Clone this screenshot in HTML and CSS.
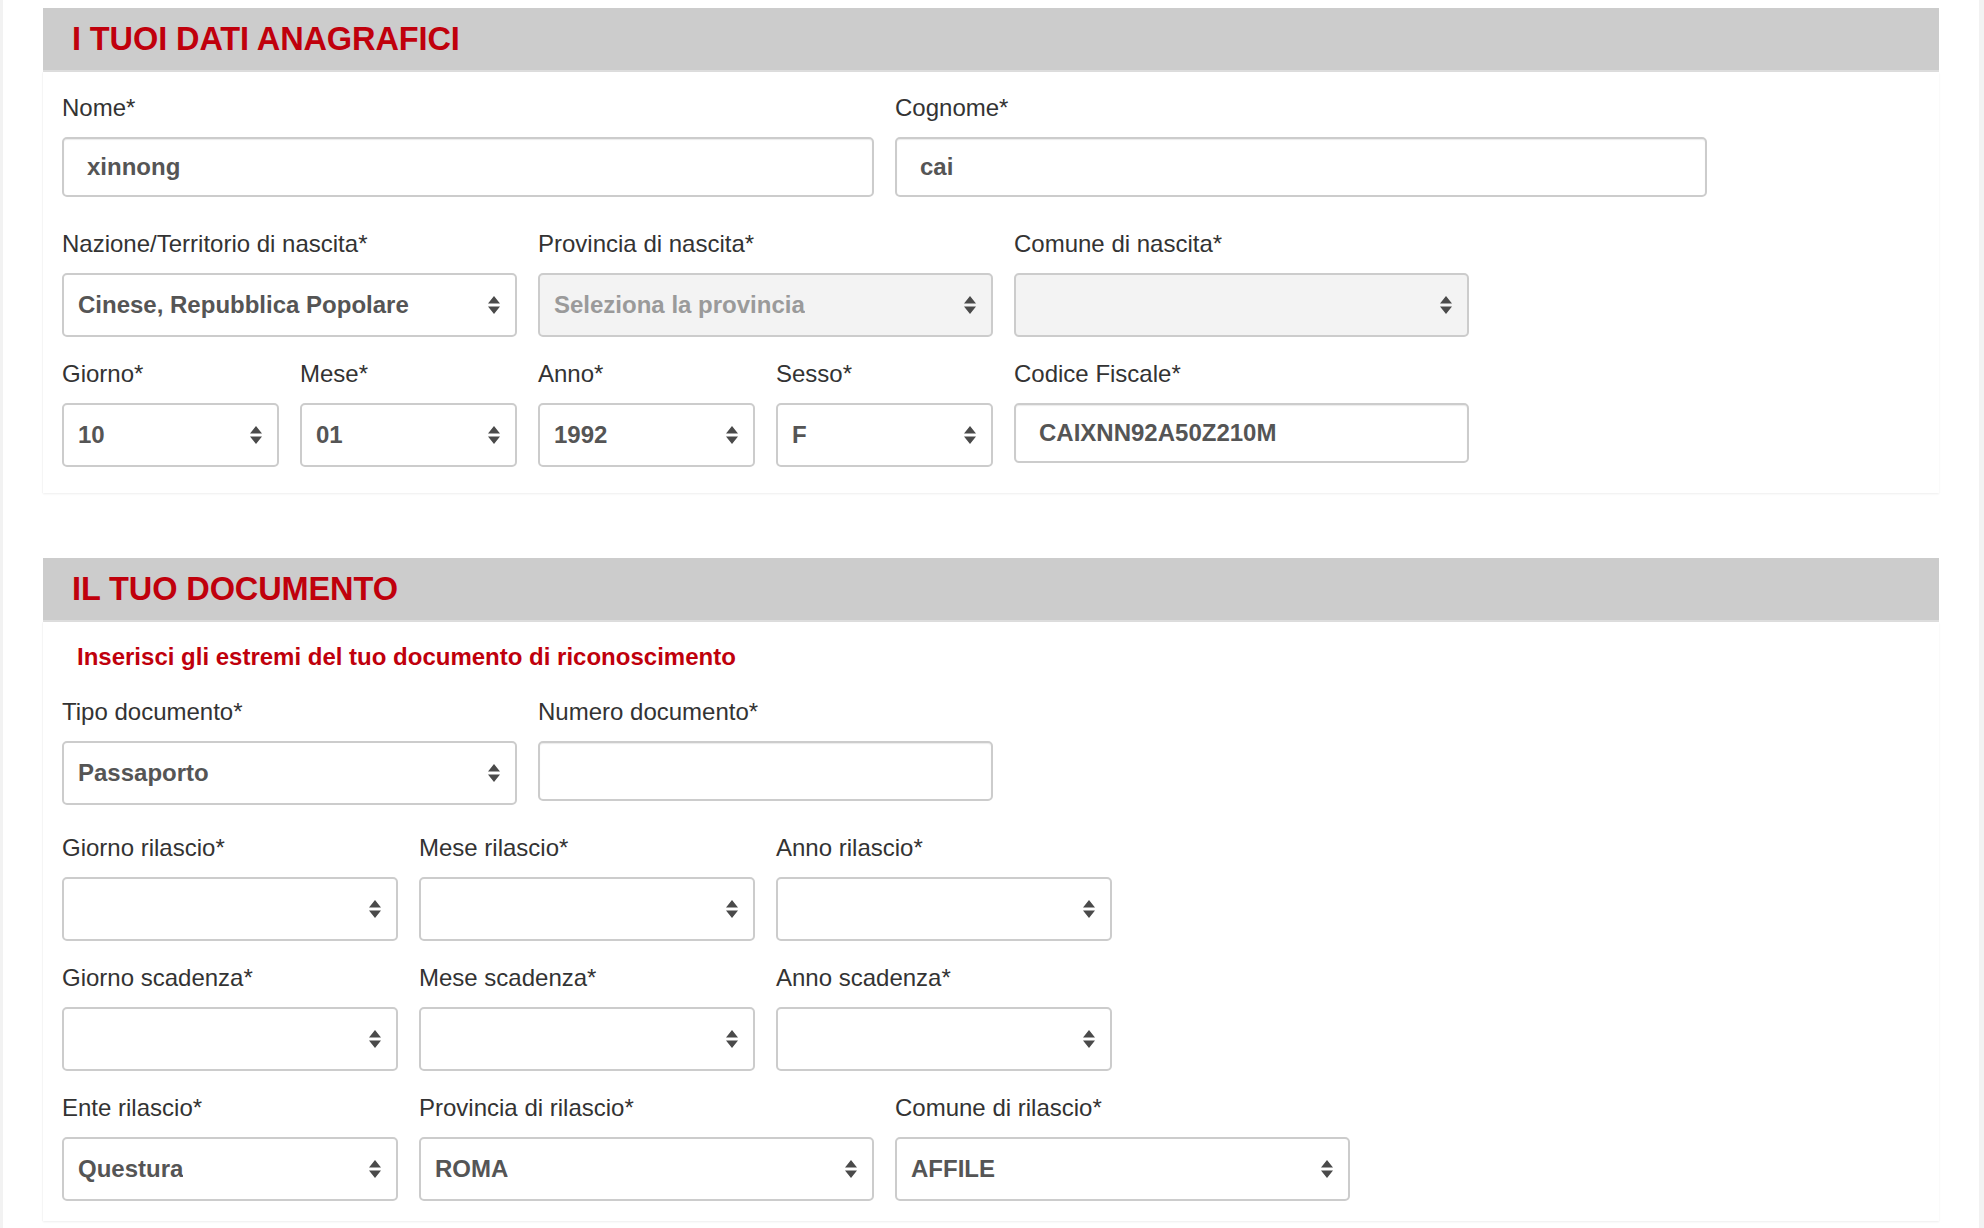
FILE: index.html
```html
<!DOCTYPE html>
<html lang="it">
<head>
<meta charset="utf-8">
<title>Dati anagrafici</title>
<link rel="stylesheet" href="styles.css">
</head>
<body>
<div class="page">

  <section class="section">
    <h2 class="section-title">I TUOI DATI ANAGRAFICI</h2>
    <div class="panel panel-first">
      <div class="row">
        <div class="field text span-7">
          <label class="label">Nome*</label>
          <input class="input" type="text" value="xinnong">
        </div>
        <div class="field text span-7">
          <label class="label">Cognome*</label>
          <input class="input" type="text" value="cai">
        </div>
      </div>
      <div class="row">
        <div class="field span-4">
          <label class="label">Nazione/Territorio di nascita*</label>
          <div class="select"><span class="select-value">Cinese, Repubblica Popolare</span><svg class="arrows" width="12" height="18" viewBox="0 0 12 18"><path d="M0 7.5L6 0L12 7.5Z M0 10.5L12 10.5L6 18Z"/></svg></div>
        </div>
        <div class="field span-4">
          <label class="label">Provincia di nascita*</label>
          <div class="select disabled"><span class="select-value">Seleziona la provincia</span><svg class="arrows" width="12" height="18" viewBox="0 0 12 18"><path d="M0 7.5L6 0L12 7.5Z M0 10.5L12 10.5L6 18Z"/></svg></div>
        </div>
        <div class="field span-4">
          <label class="label">Comune di nascita*</label>
          <div class="select disabled"><span class="select-value"></span><svg class="arrows" width="12" height="18" viewBox="0 0 12 18"><path d="M0 7.5L6 0L12 7.5Z M0 10.5L12 10.5L6 18Z"/></svg></div>
        </div>
      </div>
      <div class="row last">
        <div class="field span-2">
          <label class="label">Giorno*</label>
          <div class="select"><span class="select-value">10</span><svg class="arrows" width="12" height="18" viewBox="0 0 12 18"><path d="M0 7.5L6 0L12 7.5Z M0 10.5L12 10.5L6 18Z"/></svg></div>
        </div>
        <div class="field span-2">
          <label class="label">Mese*</label>
          <div class="select"><span class="select-value">01</span><svg class="arrows" width="12" height="18" viewBox="0 0 12 18"><path d="M0 7.5L6 0L12 7.5Z M0 10.5L12 10.5L6 18Z"/></svg></div>
        </div>
        <div class="field span-2">
          <label class="label">Anno*</label>
          <div class="select"><span class="select-value">1992</span><svg class="arrows" width="12" height="18" viewBox="0 0 12 18"><path d="M0 7.5L6 0L12 7.5Z M0 10.5L12 10.5L6 18Z"/></svg></div>
        </div>
        <div class="field span-2">
          <label class="label">Sesso*</label>
          <div class="select"><span class="select-value">F</span><svg class="arrows" width="12" height="18" viewBox="0 0 12 18"><path d="M0 7.5L6 0L12 7.5Z M0 10.5L12 10.5L6 18Z"/></svg></div>
        </div>
        <div class="field text span-4">
          <label class="label">Codice Fiscale*</label>
          <input class="input" type="text" value="CAIXNN92A50Z210M">
        </div>
      </div>
    </div>
  </section>

  <section class="section section-doc">
    <h2 class="section-title">IL TUO DOCUMENTO</h2>
    <div class="panel panel-last">
      <p class="subtitle">Inserisci gli estremi del tuo documento di riconoscimento</p>
      <div class="row">
        <div class="field span-4">
          <label class="label">Tipo documento*</label>
          <div class="select"><span class="select-value">Passaporto</span><svg class="arrows" width="12" height="18" viewBox="0 0 12 18"><path d="M0 7.5L6 0L12 7.5Z M0 10.5L12 10.5L6 18Z"/></svg></div>
        </div>
        <div class="field text span-4">
          <label class="label">Numero documento*</label>
          <input class="input" type="text" value="">
        </div>
      </div>
      <div class="row">
        <div class="field span-3">
          <label class="label">Giorno rilascio*</label>
          <div class="select"><span class="select-value"></span><svg class="arrows" width="12" height="18" viewBox="0 0 12 18"><path d="M0 7.5L6 0L12 7.5Z M0 10.5L12 10.5L6 18Z"/></svg></div>
        </div>
        <div class="field span-3">
          <label class="label">Mese rilascio*</label>
          <div class="select"><span class="select-value"></span><svg class="arrows" width="12" height="18" viewBox="0 0 12 18"><path d="M0 7.5L6 0L12 7.5Z M0 10.5L12 10.5L6 18Z"/></svg></div>
        </div>
        <div class="field span-3">
          <label class="label">Anno rilascio*</label>
          <div class="select"><span class="select-value"></span><svg class="arrows" width="12" height="18" viewBox="0 0 12 18"><path d="M0 7.5L6 0L12 7.5Z M0 10.5L12 10.5L6 18Z"/></svg></div>
        </div>
      </div>
      <div class="row">
        <div class="field span-3">
          <label class="label">Giorno scadenza*</label>
          <div class="select"><span class="select-value"></span><svg class="arrows" width="12" height="18" viewBox="0 0 12 18"><path d="M0 7.5L6 0L12 7.5Z M0 10.5L12 10.5L6 18Z"/></svg></div>
        </div>
        <div class="field span-3">
          <label class="label">Mese scadenza*</label>
          <div class="select"><span class="select-value"></span><svg class="arrows" width="12" height="18" viewBox="0 0 12 18"><path d="M0 7.5L6 0L12 7.5Z M0 10.5L12 10.5L6 18Z"/></svg></div>
        </div>
        <div class="field span-3">
          <label class="label">Anno scadenza*</label>
          <div class="select"><span class="select-value"></span><svg class="arrows" width="12" height="18" viewBox="0 0 12 18"><path d="M0 7.5L6 0L12 7.5Z M0 10.5L12 10.5L6 18Z"/></svg></div>
        </div>
      </div>
      <div class="row last">
        <div class="field span-3">
          <label class="label">Ente rilascio*</label>
          <div class="select"><span class="select-value">Questura</span><svg class="arrows" width="12" height="18" viewBox="0 0 12 18"><path d="M0 7.5L6 0L12 7.5Z M0 10.5L12 10.5L6 18Z"/></svg></div>
        </div>
        <div class="field span-4">
          <label class="label">Provincia di rilascio*</label>
          <div class="select"><span class="select-value">ROMA</span><svg class="arrows" width="12" height="18" viewBox="0 0 12 18"><path d="M0 7.5L6 0L12 7.5Z M0 10.5L12 10.5L6 18Z"/></svg></div>
        </div>
        <div class="field span-4">
          <label class="label">Comune di rilascio*</label>
          <div class="select"><span class="select-value">AFFILE</span><svg class="arrows" width="12" height="18" viewBox="0 0 12 18"><path d="M0 7.5L6 0L12 7.5Z M0 10.5L12 10.5L6 18Z"/></svg></div>
        </div>
      </div>
    </div>
  </section>

</div>
</body>
</html>
```

FILE: styles.css
```css
* {
  box-sizing: border-box;
}

html {
  overflow: hidden;
}

body {
  margin: 0;
  background: #ffffff;
  font-family: "Liberation Sans", Arial, Helvetica, sans-serif;
  color: #333333;
}

.page {
  min-height: 1228px;
  border-left: 3px solid #f2f2f2;
  border-right: 5px solid #f2f2f2;
  padding: 8px 40px 0 40px;
}

.section-doc {
  margin-top: 65px;
}

.section-title {
  margin: 0;
  height: 64px;
  background: #cccccc;
  border-bottom: 2px solid #dddddd;
  color: #c0000c;
  font-size: 32.5px;
  font-weight: bold;
  line-height: 62px;
  padding-left: 29px;
  letter-spacing: -0.1px;
}

.panel {
  background: #ffffff;
  padding: 22px 19px 6px 19px;
  box-shadow: 0 1px 2px rgba(0, 0, 0, 0.07), -1px 0 1px rgba(0, 0, 0, 0.02);
}

.panel-last {
  padding-top: 21px;
  padding-bottom: 0;
}

.subtitle {
  margin: 0 0 27px 15px;
  color: #c0000c;
  font-size: 24px;
  font-weight: bold;
  line-height: 28px;
}

.row {
  display: grid;
  grid-template-columns: repeat(14, 98px);
  column-gap: 21px;
  align-items: start;
}

.field {
  display: flex;
  flex-direction: column;
  margin-bottom: 23px;
}

.field.text {
  margin-bottom: 33px;
}

.row.last .field {
  margin-bottom: 20px;
}

.span-2 { grid-column: span 2; }
.span-3 { grid-column: span 3; }
.span-4 { grid-column: span 4; }
.span-7 { grid-column: span 7; }

.label {
  display: block;
  font-size: 24px;
  line-height: 28px;
  margin-bottom: 15px;
  color: #333333;
  white-space: nowrap;
}

.input {
  display: block;
  width: 100%;
  height: 60px;
  margin: 0;
  border: 2px solid #cccccc;
  border-radius: 5px;
  box-shadow: inset 0 1px 1px rgba(0, 0, 0, 0.08);
  padding: 0 20px 0 23px;
  font-family: "Liberation Sans", Arial, Helvetica, sans-serif;
  font-size: 24px;
  font-weight: bold;
  color: #555555;
  background: #ffffff;
  outline: none;
}

.select {
  display: flex;
  align-items: center;
  justify-content: space-between;
  height: 64px;
  border: 2px solid #cccccc;
  border-radius: 5px;
  background: #ffffff;
  padding: 0 15px 0 14px;
  font-size: 24px;
  font-weight: bold;
  color: #555555;
}

.select.disabled {
  background: #f3f3f3;
  color: #9a9a9a;
}

.select-value {
  white-space: nowrap;
  overflow: hidden;
}

.arrows {
  flex: none;
  fill: #4a4a4a;
}
```
